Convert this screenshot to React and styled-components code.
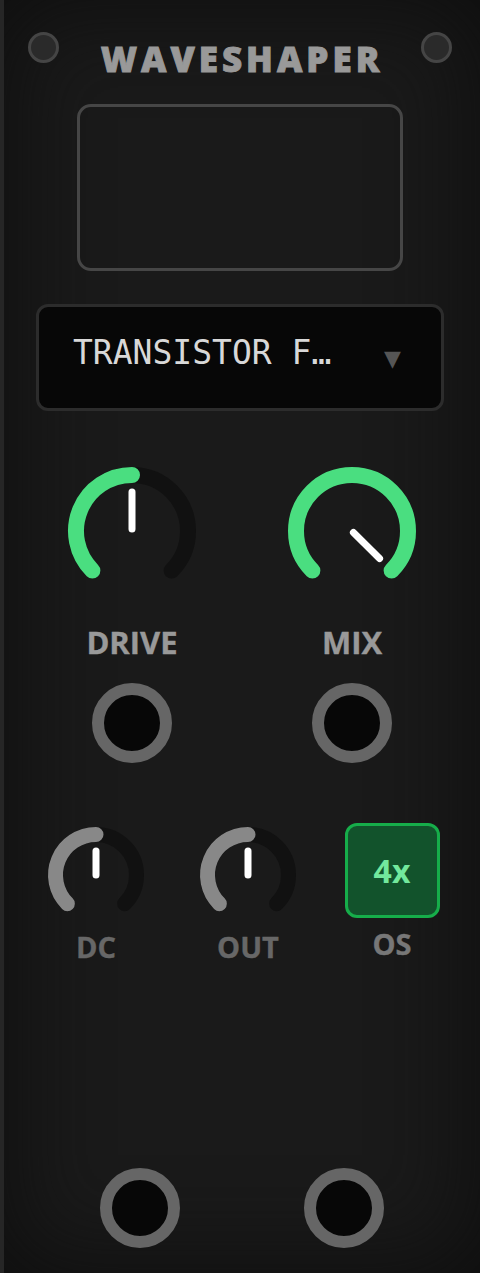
import React from "react";
import styled, { createGlobalStyle } from "styled-components";

const GlobalStyle = createGlobalStyle`
  html, body {
    margin: 0;
    padding: 0;
    background: #111;
  }
  * {
    box-sizing: border-box;
  }
`;

const Panel = styled.div`
  width: 480px;
  height: 1273px;
  display: flex;
  flex-direction: column;
  padding: 32px 0 25px;
  background: #1a1a1a;
  box-shadow: inset 4px 0 0 #262626, inset 0 0 90px 10px #0f0f0f;
  font-family: "Open Sans", "Noto Sans", sans-serif;
  overflow: hidden;
`;

const Header = styled.div`
  display: flex;
  justify-content: space-between;
  align-items: flex-start;
  padding: 0 28px;
  height: 44px;
`;

const Screw = styled.div`
  width: 31px;
  height: 31px;
  border-radius: 50%;
  background: #2a2a2a;
  border: 3px solid #454545;
`;

const Title = styled.h1`
  margin: 9px 0 0 4px;
  font-size: 35px;
  line-height: 35px;
  font-weight: 800;
  letter-spacing: 4px;
  color: #999;
  -webkit-text-stroke: 0.9px #999;
`;

const Display = styled.div`
  width: 326px;
  height: 167px;
  margin: 28px auto 0;
  border: 3px solid #464646;
  border-radius: 14px;
`;

const Dropdown = styled.div`
  width: 408px;
  height: 107px;
  margin: 33px auto 0;
  display: flex;
  align-items: center;
  justify-content: space-between;
  padding: 0 40px 0 34px;
  background: #070707;
  border: 3px solid #2c2c2c;
  border-radius: 12px;
`;

const DropText = styled.span`
  font-family: "DejaVu Sans Mono", "Liberation Mono", monospace;
  font-size: 33px;
  color: #d8d8d8;
  margin-top: -10px;
`;

const Arrow = styled.span`
  font-family: "DejaVu Sans", sans-serif;
  font-size: 22px;
  color: #555;
  margin-top: 2px;
`;

const Row = styled.div`
  display: flex;
  justify-content: center;
  padding-left: 4px;
  gap: ${(p) => p.$gap}px;
  margin-top: ${(p) => p.$mt};
`;

const SmallRow = styled.div`
  display: grid;
  grid-template-columns: 100px 204px 84px;
  justify-items: center;
  align-items: start;
  padding-left: 46px;
  margin-top: 62px;
`;

const Cell = styled.div`
  display: flex;
  flex-direction: column;
  align-items: center;
`;

const Label = styled.div`
  margin-top: ${(p) => p.$mt}px;
  font-size: ${(p) => p.$size}px;
  line-height: ${(p) => p.$size}px;
  font-weight: 700;
  color: ${(p) => p.$color};
  -webkit-text-stroke: 0.4px ${(p) => p.$color};
`;

const Jack = styled.div`
  width: 80px;
  height: 80px;
  border-radius: 50%;
  background: #070707;
  border: 12px solid #666;
`;

const Toggle = styled.div`
  width: 95px;
  height: 95px;
  margin-top: -2px;
  display: flex;
  align-items: center;
  justify-content: center;
  background: #12532c;
  border: 3px solid #16ad4a;
  border-radius: 12px;
  color: #72e89d;
  font-size: 32px;
  font-weight: 700;
`;

const polar = (c, r, deg) => {
  const a = (deg * Math.PI) / 180;
  return [c + r * Math.sin(a), c - r * Math.cos(a)];
};

const arc = (c, r, a0, a1) => {
  const [x0, y0] = polar(c, r, a0);
  const [x1, y1] = polar(c, r, a1);
  const large = a1 - a0 > 180 ? 1 : 0;
  return `M ${x0} ${y0} A ${r} ${r} 0 ${large} 1 ${x1} ${y1}`;
};

function Knob({ size, r, stroke, value, color, pFrom, pTo }) {
  const c = size / 2;
  const end = -135 + 270 * value;
  const [px0, py0] = polar(c, pFrom, end);
  const [px1, py1] = polar(c, pTo, end);
  return (
    <svg width={size} height={size} viewBox={`0 0 ${size} ${size}`}>
      <path d={arc(c, r, -135, 135)} fill="none" stroke="#111" strokeWidth={stroke} strokeLinecap="round" />
      <path d={arc(c, r, -135, end)} fill="none" stroke={color} strokeWidth={stroke} strokeLinecap="round" />
      <line x1={px0} y1={py0} x2={px1} y2={py1} stroke="#fff" strokeWidth="7" strokeLinecap="round" />
    </svg>
  );
}

const BigKnob = ({ value }) => (
  <Knob size={130} r={56} stroke={16} value={value} color="#4ade80" pFrom={2} pTo={39} />
);

const SmallKnob = ({ value }) => (
  <Knob size={100} r={40.5} stroke={15} value={value} color="#888" pFrom={0} pTo={24} />
);

export default function App() {
  return (
    <>
      <GlobalStyle />
      <Panel>
        <Header>
          <Screw />
          <Title>WAVESHAPER</Title>
          <Screw />
        </Header>
        <Display />
        <Dropdown>
          <DropText>TRANSISTOR F…</DropText>
          <Arrow>▼</Arrow>
        </Dropdown>

        <Row $gap={90} $mt="55px">
          <Cell>
            <BigKnob value={0.5} />
            <Label $mt={31} $size={31} $color="#999">DRIVE</Label>
          </Cell>
          <Cell>
            <BigKnob value={1} />
            <Label $mt={31} $size={31} $color="#999">MIX</Label>
          </Cell>
        </Row>

        <Row $gap={140} $mt="25px">
          <Jack />
          <Jack />
        </Row>

        <SmallRow>
          <Cell>
            <SmallKnob value={0.5} />
            <Label $mt={7} $size={29} $color="#676767">DC</Label>
          </Cell>
          <Cell>
            <SmallKnob value={0.5} />
            <Label $mt={7} $size={29} $color="#676767">OUT</Label>
          </Cell>
          <Cell>
            <Toggle>4x</Toggle>
            <Label $mt={11} $size={29} $color="#777">OS</Label>
          </Cell>
        </SmallRow>

        <Row $gap={124} $mt="auto">
          <Jack />
          <Jack />
        </Row>
      </Panel>
    </>
  );
}
